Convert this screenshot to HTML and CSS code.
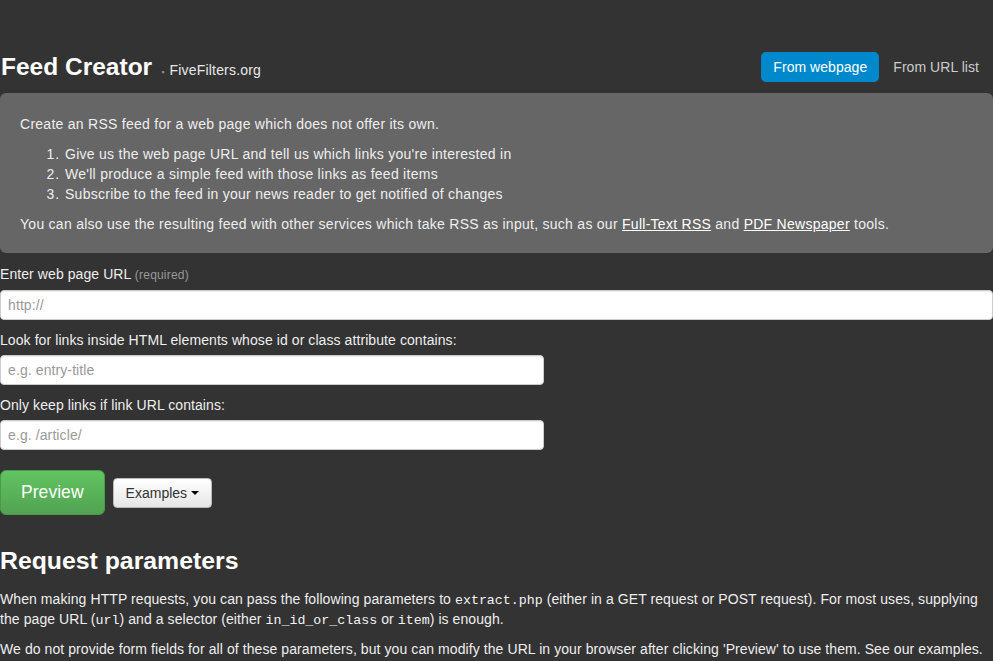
FILE: index.html
```html
<!DOCTYPE html>
<html lang="en">
<head>
    <meta charset="UTF-8">
    <title>Feed Creator - FiveFilters.org</title>
    <link rel="stylesheet" href="styles.css">
</head>
<body>
    <div class="container">
        <div class="header">
            <div class="brand">
                <h1 class="title">Feed Creator</h1>
                <span class="sep">&#9642;</span>
                <span class="site">FiveFilters.org</span>
            </div>
            <ul class="pills">
                <li class="active"><a href="#">From webpage</a></li>
                <li><a href="#">From URL list</a></li>
            </ul>
        </div>

        <!-- Intro -->
        <div class="hero">
            <p>Create an RSS feed for a web page which does not offer its own.</p>
            <ol>
                <li>Give us the web page URL and tell us which links you're interested in</li>
                <li>We'll produce a simple feed with those links as feed items</li>
                <li>Subscribe to the feed in your news reader to get notified of changes</li>
            </ol>
            <p>You can also use the resulting feed with other services which take RSS as input, such as our <a href="#">Full-Text RSS</a> and <a href="#">PDF Newspaper</a> tools.</p>
        </div>

        <!-- Form -->
        <form class="feed-form" onsubmit="return false">
            <label for="url">Enter web page URL <small>(required)</small></label>
            <input type="text" id="url" class="field wide" placeholder="http://">

            <label for="in_id_or_class">Look for links inside HTML elements whose id or class attribute contains:</label>
            <input type="text" id="in_id_or_class" class="field" placeholder="e.g. entry-title">

            <label for="url_contains">Only keep links if link URL contains:</label>
            <input type="text" id="url_contains" class="field" placeholder="e.g. /article/">

            <div class="actions">
                <button type="submit" class="btn-preview">Preview</button>
                <button type="button" class="btn-examples">Examples <span class="caret"></span></button>
            </div>
        </form>

        <div class="params">
            <h2>Request parameters</h2>
            <p>When making HTTP requests, you can pass the following parameters to <code>extract.php</code> (either in a GET request or POST request). For most uses, supplying the page URL (<code>url</code>) and a selector (either <code>in_id_or_class</code> or <code>item</code>) is enough.</p>
            <p>We do not provide form fields for all of these parameters, but you can modify the URL in your browser after clicking 'Preview' to use them. See our examples.</p>
        </div>
    </div>
</body>
</html>
```

FILE: styles.css
```css
body {
    margin: 0;
    background: #333333;
    color: #eeeeee;
    font-family: "Liberation Sans", Arial, sans-serif;
    font-size: 14px;
    line-height: 20px;
    letter-spacing: 0.08px;
}
.container {
    width: 993px;
}
p {
    margin: 0 0 10px;
}
a {
    color: #ffffff;
}
.header {
    display: flex;
    justify-content: space-between;
    align-items: center;
    height: 30px;
    margin: 52px 0 11px;
}
.brand {
    display: flex;
    align-items: baseline;
}
.title {
    margin: 0 0 0 1px;
    font-size: 24.5px;
    line-height: 30px;
    letter-spacing: 0;
    color: #ffffff;
}
.sep {
    color: #888888;
    font-size: 9px;
    margin: 0 5px 0 9px;
}
.site {
    color: #e8e8e8;
    letter-spacing: 0.2px;
}
.pills {
    display: flex;
    list-style: none;
    margin: 0 2px 0 0;
    padding: 0;
}
.pills li {
    margin-left: 2px;
}
.pills a {
    display: block;
    padding: 5px 12px;
    border-radius: 5px;
    color: #cccccc;
    text-decoration: none;
    letter-spacing: 0.05px;
}
.pills .active a {
    background: #0088cc;
    color: #ffffff;
}
.hero {
    background: #666666;
    border-radius: 6px;
    padding: 21px 20px 19px;
    margin-bottom: 11px;
    letter-spacing: 0.27px;
}
.hero p:last-child {
    margin-bottom: 0;
}
.hero ol {
    margin: 0 0 10px 45px;
    padding: 0;
}
.hero li::marker {
    letter-spacing: 1px;
}
.feed-form label {
    display: block;
    margin-bottom: 5px;
}
.feed-form small {
    color: #999999;
    font-size: 12px;
    letter-spacing: 0.2px;
}
.field {
    display: block;
    box-sizing: border-box;
    width: 544px;
    height: 30px;
    margin: 0 0 10px;
    padding: 4px 7px;
    border: 1px solid #cccccc;
    border-radius: 4px;
    background: #ffffff;
    font-family: inherit;
    font-size: 14px;
    letter-spacing: 0.1px;
    color: #555555;
    box-shadow: inset 0 1px 1px rgba(0, 0, 0, 0.075);
}
.field.wide {
    width: 993px;
}
.field::placeholder {
    color: #999999;
}
.actions {
    display: flex;
    align-items: center;
    gap: 8px;
    margin-top: 20px;
}
.btn-preview {
    padding: 11px 20px;
    font-family: inherit;
    font-size: 17.5px;
    line-height: 21px;
    letter-spacing: 0.05px;
    color: #ffffff;
    background: linear-gradient(#62c462, #51a351);
    border: 1px solid #4a9a4a;
    border-radius: 6px;
    cursor: pointer;
}
.btn-examples {
    padding: 4px 12px;
    font-family: inherit;
    font-size: 14px;
    line-height: 20px;
    letter-spacing: 0;
    color: #333333;
    background: linear-gradient(#ffffff, #e6e6e6);
    border: 1px solid #bbbbbb;
    border-radius: 4px;
    cursor: pointer;
}
.caret {
    display: inline-block;
    width: 0;
    height: 0;
    vertical-align: middle;
    margin-top: -2px;
    border-top: 4px solid #000000;
    border-left: 4px solid transparent;
    border-right: 4px solid transparent;
}
.params h2 {
    margin: 31px 0 13px;
    font-size: 24.8px;
    line-height: 30px;
    letter-spacing: 0;
    color: #ffffff;
}
.params code {
    font-family: "Liberation Mono", "Courier New", monospace;
    font-size: 13.3px;
    line-height: 1;
    letter-spacing: 0;
    color: #f4f4f4;
}
```
